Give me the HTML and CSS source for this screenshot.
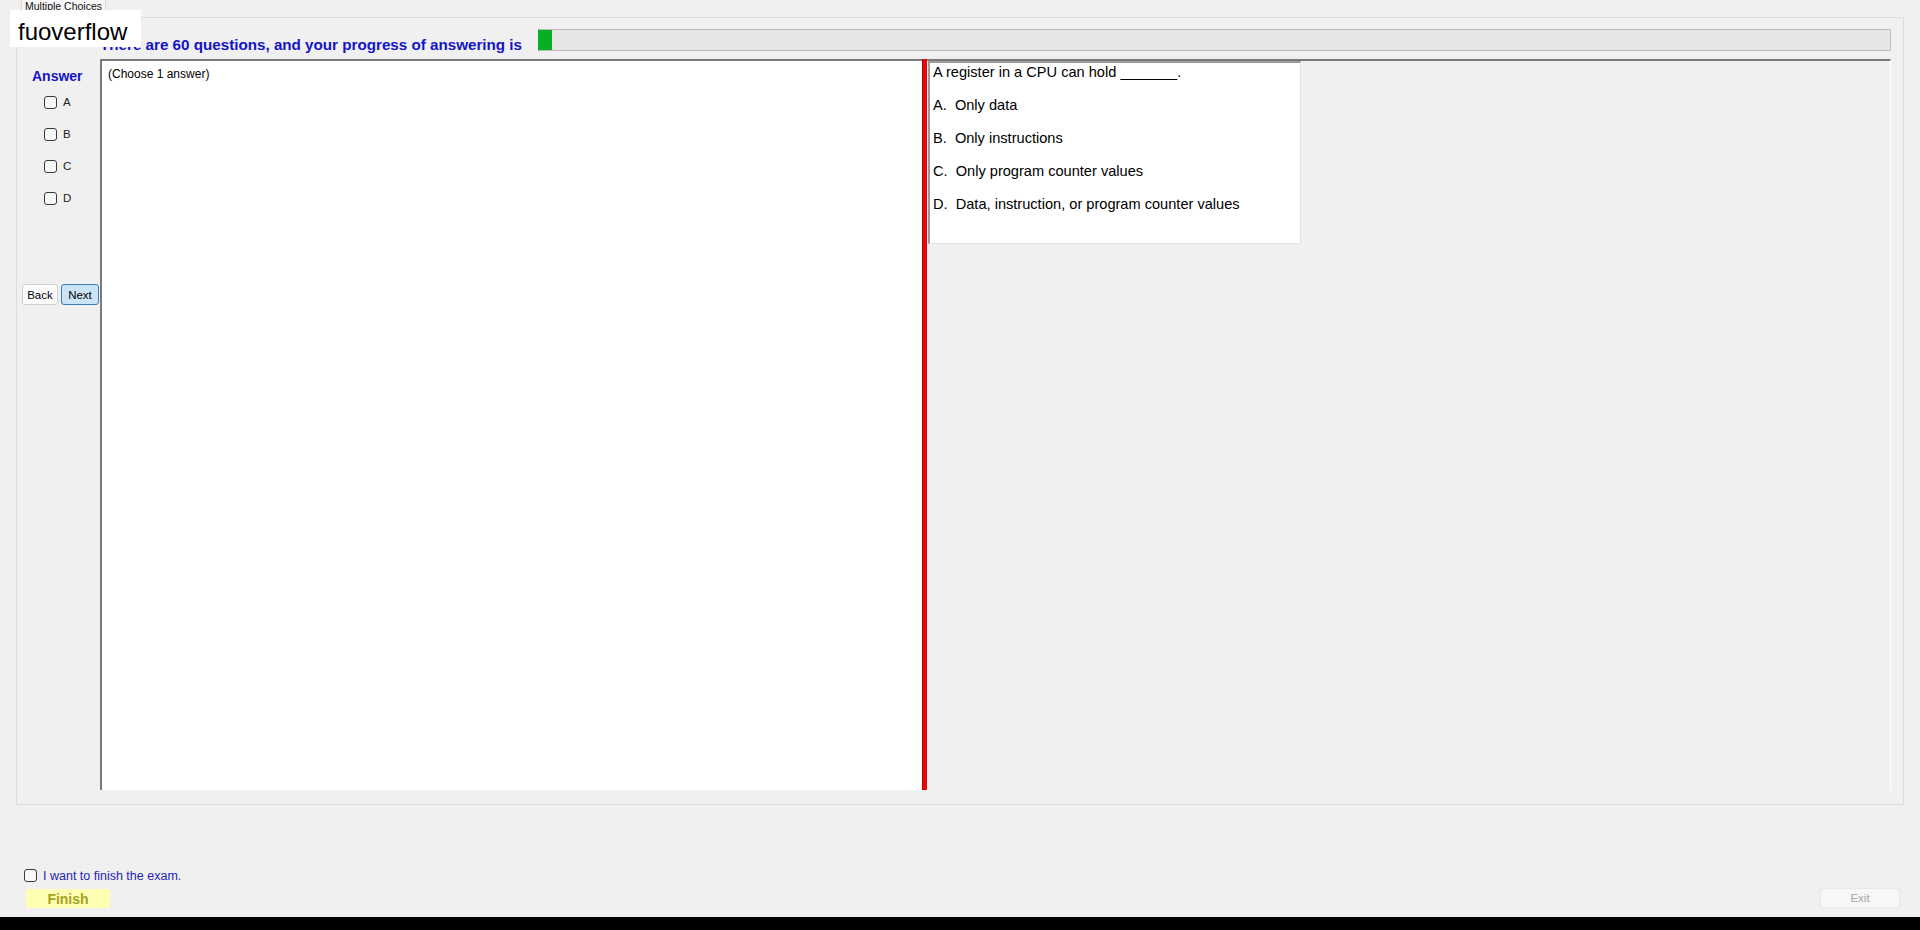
FILE: index.html
```html
<!DOCTYPE html>
<html lang="en">
<head>
    <meta charset="UTF-8">
    <title>Multiple Choices</title>
    <link rel="stylesheet" href="styles.css">
</head>
<body>
    <div class="tabs">
        <div class="tab">Multiple Choices</div>
    </div>

    <div class="page">
        <div class="header">
            <span class="progress-text">There are 60 questions, and your progress of answering is</span>
            <div class="progress"><div class="progress-fill" style="width: 13px;"></div></div>
        </div>

        <div class="main">
            <div class="sidebar">
                <div class="answer-title">Answer</div>
                <label class="opt"><input type="checkbox"> A</label>
                <label class="opt"><input type="checkbox"> B</label>
                <label class="opt"><input type="checkbox"> C</label>
                <label class="opt"><input type="checkbox"> D</label>
                <div class="nav">
                    <button class="btn btn-back">Back</button>
                    <button class="btn btn-next">Next</button>
                </div>
            </div>

            <div class="answer-box">(Choose 1 answer)</div>
            <div class="splitter"></div>

            <div class="question-pane">
                <div class="question-box">
                    <p>A register in a CPU can hold _______.</p>
                    <p>A.  Only data</p>
                    <p>B.  Only instructions</p>
                    <p>C.  Only program counter values</p>
                    <p>D.  Data, instruction, or program counter values</p>
                </div>
            </div>
        </div>
    </div>

    <div class="footer">
        <div class="finish-col">
            <label class="finish-check"><input type="checkbox"> I want to finish the exam.</label>
            <button class="btn-finish">Finish</button>
        </div>
        <button class="btn-exit">Exit</button>
    </div>

    <div class="taskbar"></div>

    <div class="watermark">fuoverflow</div>
</body>
</html>
```

FILE: styles.css
```css
body {
    margin: 0;
    width: 1920px;
    height: 930px;
    overflow: hidden;
    position: relative;
    display: flex;
    flex-direction: column;
    background: #f0f0f0;
    font-family: "Liberation Sans", Arial, sans-serif;
    color: #000;
}

/* tab strip */
.tabs {
    height: 17px;
    padding-left: 21px;
    display: flex;
}
.tab {
    height: 17px;
    padding: 0 3px;
    border-left: 1px solid #d9d9d9;
    border-right: 1px solid #d9d9d9;
    background: #f7f7f7;
    font-size: 10.5px;
    line-height: 12px;
    white-space: nowrap;
    color: #111;
    box-sizing: border-box;
}

.page {
    margin-left: 16px;
    width: 1888px;
    height: 788px;
    box-sizing: border-box;
    border: 1px solid #dcdcdc;
    padding: 11px 12px 14px 5px;
    display: flex;
    flex-direction: column;
    gap: 8px;
}

/* progress header */
.header {
    height: 22px;
    display: flex;
    gap: 16px;
    padding-left: 78px;
}
.progress-text {
    align-self: flex-end;
    font-size: 15.2px;
    line-height: 13px;
    font-weight: bold;
    color: #1414c8;
    white-space: nowrap;
}
.progress {
    flex: 1;
    background: #e6e6e6;
    border: 1px solid #bcbcbc;
    border-left-color: #06b025;
    display: flex;
}
.progress-fill {
    background: #06b025;
}

.main {
    height: 731px;
    display: grid;
    grid-template-columns: 78px 822px 5px 1fr;
}

/* answer column */
.sidebar {
    padding-top: 9px;
}
.answer-title {
    padding-left: 10px;
    font-size: 14px;
    line-height: 16px;
    font-weight: bold;
    color: #1414c8;
    margin-bottom: 2px;
}
.opt {
    height: 32px;
    padding-left: 22px;
    display: flex;
    align-items: center;
    gap: 6px;
    font-size: 11.5px;
    color: #222;
}
input[type="checkbox"] {
    appearance: none;
    -webkit-appearance: none;
    margin: 0;
    width: 13px;
    height: 13px;
    box-sizing: border-box;
    border: 1px solid #3a3a3a;
    border-radius: 3px;
    background: #f7f7f7;
}
.nav {
    margin-top: 70px;
    display: flex;
    gap: 3px;
}
.btn {
    height: 21px;
    padding: 0;
    font-family: "Liberation Sans", Arial, sans-serif;
    font-size: 11.5px;
    color: #000;
    border-radius: 3px;
}
.btn-back {
    width: 36px;
    background: #fdfdfd;
    border: 1px solid #d0d0d0;
}
.btn-next {
    width: 38px;
    background: #cce4f7;
    border: 1px solid #3d7ab8;
}

.answer-box {
    background: #fff;
    border-top: 2px solid #7a7a7a;
    border-left: 2px solid #7a7a7a;
    padding: 6px 6px;
    font-size: 12px;
    line-height: 14px;
}

.splitter {
    background: #e20a0a;
    border-left: 1px solid #b80000;
}

.question-pane {
    background: #f0f0f0;
    border-top: 2px solid #7a7a7a;
    border-right: 1px solid #fff;
    padding-left: 1px;
}
.question-box {
    width: 373px;
    height: 183px;
    box-sizing: border-box;
    background: #fff;
    border-left: 2px solid #9a9a9a;
    border-top: 2px solid #9a9a9a;
    border-right: 1px solid #e3e3e3;
    border-bottom: 1px solid #e3e3e3;
    padding: 1px 3px;
}
.question-box p {
    margin: 0 0 16px;
    font-size: 14.6px;
    line-height: 17px;
    white-space: pre;
}

/* bottom bar */
.footer {
    flex: 1;
    padding: 61px 20px 9px 24px;
    display: flex;
    justify-content: space-between;
    align-items: flex-end;
}
.finish-col {
    display: flex;
    flex-direction: column;
    gap: 5px;
}
.finish-check {
    height: 17px;
    display: flex;
    align-items: center;
    gap: 6px;
    font-size: 12.5px;
    color: #2424b4;
}
.btn-finish {
    margin-left: 2px;
    width: 84px;
    height: 19px;
    padding: 0;
    border: none;
    border-radius: 2px;
    background: #ffffb4;
    color: #a3a31a;
    font-family: "Liberation Sans", Arial, sans-serif;
    font-size: 14px;
    font-weight: bold;
}
.btn-exit {
    width: 80px;
    height: 20px;
    padding: 0;
    background: #f7f7f7;
    border: 1px solid #e8e8e8;
    border-radius: 3px;
    color: #a6a6a6;
    font-family: "Liberation Sans", Arial, sans-serif;
    font-size: 11.5px;
}

.taskbar {
    height: 13px;
    background: #000;
}

/* watermark sits on top of the header text */
.watermark {
    position: absolute;
    left: 10px;
    top: 10px;
    width: 131px;
    height: 37px;
    box-sizing: border-box;
    padding: 6px 0 0 8px;
    background: #fff;
    font-size: 24px;
    line-height: 31px;
}
```
